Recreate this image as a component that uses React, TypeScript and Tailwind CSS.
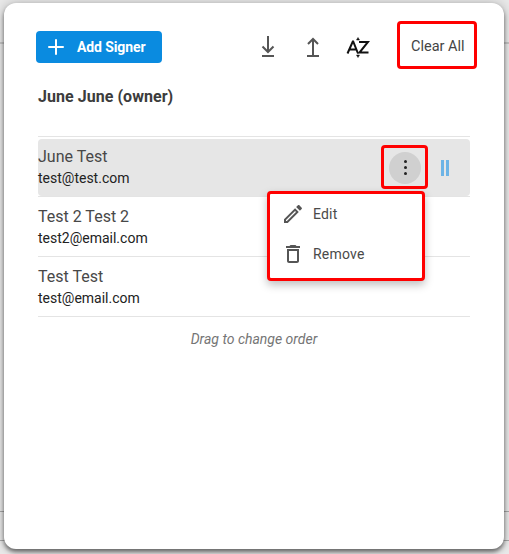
import { Plus } from "lucide-react";

const signers = [
    { name: "June Test", email: "test@test.com", active: true },
    { name: "Test 2 Test 2", email: "test2@email.com", active: false },
    { name: "Test Test", email: "test@email.com", active: false },
];

const DownloadIcon = () => (
    <svg width="24" height="24" viewBox="0 0 24 24" fill="none" stroke="#555" strokeWidth="2">
        <path d="M12 1v16M6.500 11.500 12 17l5.500-5.500M6 21h12" />
    </svg>
);

const UploadIcon = () => (
    <svg width="24" height="24" viewBox="0 0 24 24" fill="none" stroke="#555" strokeWidth="2">
        <path d="M12 5v16M7 9l5-5 5 5M6 21h12" />
    </svg>
);

const SortIcon = () => (
    <svg width="24" height="24" viewBox="0 0 24 24" fill="none" stroke="#111" strokeWidth="2">
        <path d="M1.500 18.500 6.800 6.500h.4L12 18.500M3.500 14.500h7" />
        <path d="M13 7h9L13.500 17.500H22.500" />
        <path d="M10.500 5l1.500-2.500 1.500 2.500z" fill="#111" strokeWidth="0.500" />
        <path d="M10.500 20l1.500 2.500 1.500-2.500z" fill="#111" strokeWidth="0.500" />
    </svg>
);

const EditIcon = () => (
    <svg width="24" height="24" viewBox="0 0 24 24" fill="#555">
        <path d="M3 17.250V21h3.750L17.810 9.940l-3.750-3.750L3 17.250zM5.920 19H5v-.92l9.060-9.060.92.92L5.920 19zM20.710 5.630l-2.340-2.340c-.2-.2-.45-.29-.71-.29s-.51.1-.7.29l-1.830 1.830 3.750 3.750 1.830-1.830c.39-.39.39-1.020 0-1.410z" />
    </svg>
);

const TrashIcon = () => (
    <svg width="24" height="24" viewBox="0 0 24 24" fill="#555">
        <path d="M6 19c0 1.100.9 2 2 2h8c1.100 0 2-.9 2-2V7H6v12zM8 9h8v10H8V9zm7.500-5-1-1h-5l-1 1H5v2h14V4h-3.500z" />
    </svg>
);

export default function App() {
    return (
        <div className="relative h-[554px] w-[509px] overflow-hidden bg-[#e9e9e9] font-['Roboto',sans-serif]">
            <div className="absolute inset-x-0 top-[42px] h-[2px] bg-[#c6c6c6]" />
            <div className="absolute inset-x-0 top-[511px] h-px bg-[#a8a8a8]" />
            <div className="absolute inset-x-0 top-[540px] h-px bg-[#a8a8a8]" />

            <div className="relative mt-[3px] ml-[4px] h-[546px] w-[500px] rounded-xl bg-white px-[34px] pt-[28px] shadow-[0_3px_4px_rgba(0,0,0,0.5),0_0_12px_rgba(0,0,0,0.22)]">
                <div className="flex h-8 items-center">
                    <button className="-ml-[2px] flex h-8 w-[126px] items-center rounded bg-[#0a8be0] pb-[1px] pl-[8px] text-sm font-bold text-white">
                        <Plus size={24} strokeWidth={2} />
                        <span className="ml-[9px] tracking-[-0.1px]">Add Signer</span>
                    </button>
                    <div className="ml-[94px] flex gap-[21px]">
                        <DownloadIcon />
                        <UploadIcon />
                        <SortIcon />
                    </div>
                    <button className="ml-[41px] pb-[1px] text-[14.500px] text-[#444]">Clear All</button>
                </div>

                <h2 className="mt-[23px] text-base leading-[22px] font-bold tracking-[0.05px] text-[#3c3c3c]">June June (owner)</h2>

                <ul className="mt-[28px] w-[432px] border-t border-[#e4e4e4]">
                    {signers.map((signer) => (
                        <li key={signer.email} className="h-[60px] border-b border-[#e4e4e4] pt-[2px]">
                            <div className={`flex h-[57px] items-center rounded ${signer.active ? "bg-[#e6e6e6]" : ""}`}>
                                <div className="flex-1 pb-[1px]">
                                    <div className="text-base leading-[22px] text-[#484848]">{signer.name}</div>
                                    <div className="text-sm leading-[20px] text-[#222]">{signer.email}</div>
                                </div>
                                {signer.active && (
                                    <>
                                        <button className="flex h-8 w-8 items-center justify-center rounded-full bg-[#d0d0d0]">
                                            <span className="flex flex-col gap-[3px]">
                                                <span className="h-[3px] w-[3px] rounded-full bg-[#222]" />
                                                <span className="h-[3px] w-[3px] rounded-full bg-[#222]" />
                                                <span className="h-[3px] w-[3px] rounded-full bg-[#222]" />
                                            </span>
                                        </button>
                                        <span className="mr-[21px] ml-[20px] flex gap-[2px]">
                                            <span className="h-[16px] w-[3px] bg-[#6db4e6]" />
                                            <span className="h-[16px] w-[3px] bg-[#6db4e6]" />
                                        </span>
                                    </>
                                )}
                            </div>
                        </li>
                    ))}
                </ul>

                <p className="mt-[12px] w-[432px] text-center text-sm text-[#757575] italic">Drag to change order</p>

                {/* annotation boxes and the open menu sit over the list */}
                <div className="absolute top-[18px] left-[393px] h-[48px] w-[80px] rounded-sm border-[3px] border-[#ff0000]" />
                <div className="absolute top-[142px] left-[377px] h-[44px] w-[47px] rounded-sm border-[3px] border-[#ff0000]" />
                <div className="absolute top-[188px] left-[263px] h-[90px] w-[158px] rounded-sm border-[3px] border-[#ff0000] bg-white shadow-[0_4px_8px_rgba(0,0,0,0.25)]">
                    <div className="flex h-[40px] items-center pl-[11px] text-sm tracking-[0.2px] text-[#4a4a4a]">
                        <EditIcon />
                        <span className="ml-[8px]">Edit</span>
                    </div>
                    <div className="flex h-[40px] items-center pl-[11px] text-sm tracking-[0.2px] text-[#4a4a4a]">
                        <TrashIcon />
                        <span className="ml-[8px]">Remove</span>
                    </div>
                </div>
            </div>
        </div>
    );
}
